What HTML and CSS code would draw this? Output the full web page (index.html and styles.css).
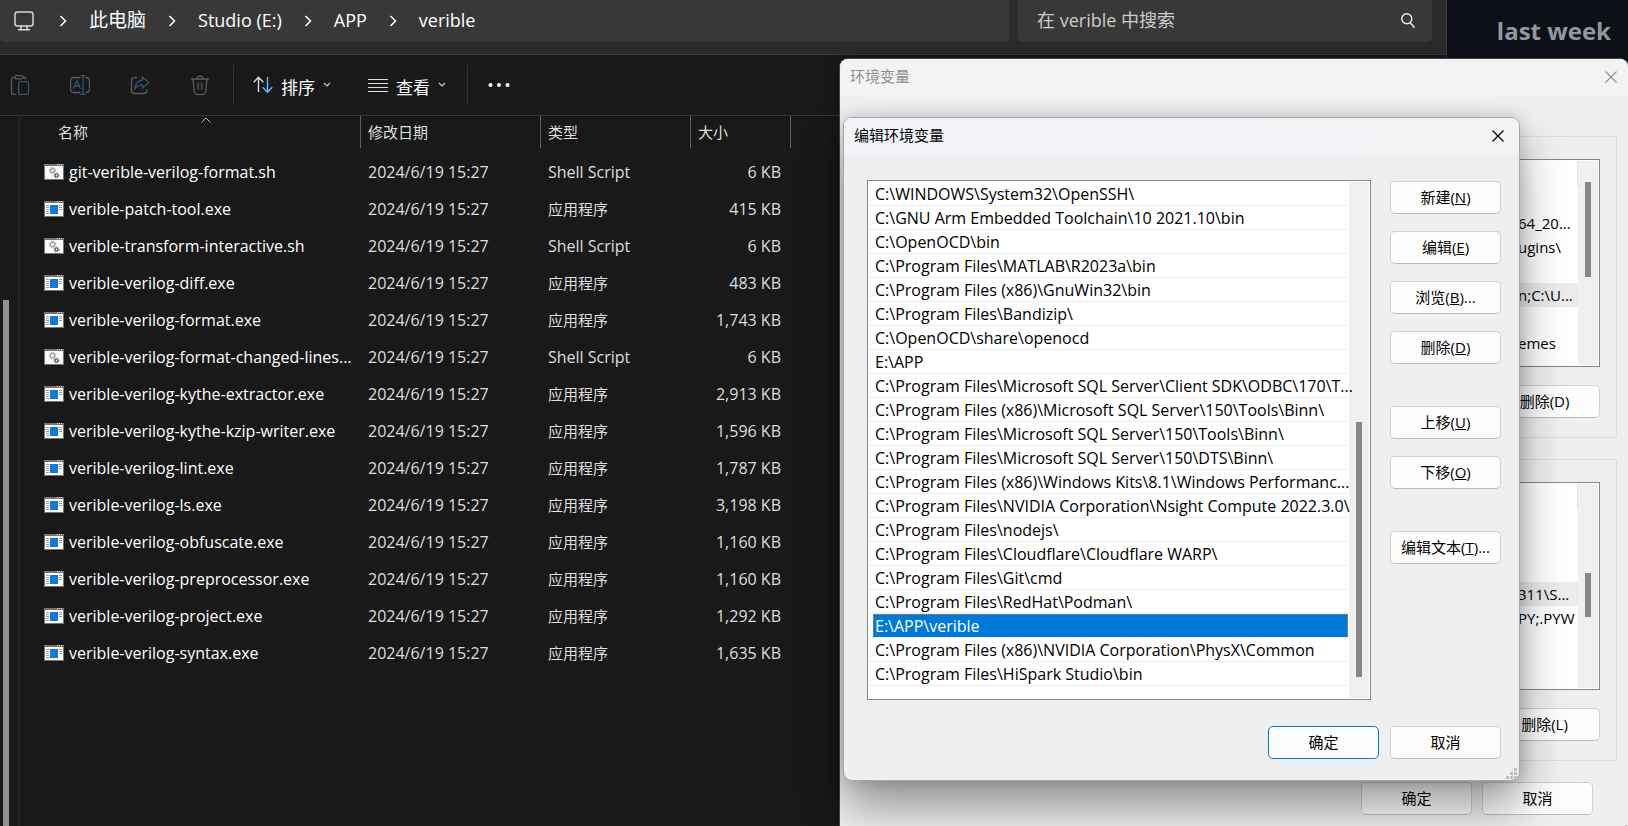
FILE: index.html
```html
<!DOCTYPE html>
<html lang="zh-CN">
<head>
<meta charset="utf-8">
<title>verible</title>
<link rel="stylesheet" href="styles.css">
</head>
<body>
<svg class="symbols" aria-hidden="true">
  <symbol id="exe" viewBox="0 0 20 16">
    <path fill="#75746f" d="M0 0h20v16H0z"/><path fill="#fff" d="M1 2h18v13H1z"/>
    <path fill="#ddd" d="M13 0h1v1h-1zM15 0h1v1h-1zM17 0h1v1h-1z"/>
    <path fill="#0f7bd6" d="M6 4h8v9H6z"/>
    <path stroke="#999" d="M2 4.500h3M2 6.500h3M2 8.500h3M2 10.500h3M2 12.500h3M15 4.500h3M15 6.500h3M15 8.500h3"/>
  </symbol>
  <symbol id="sh" viewBox="0 0 20 16">
    <path fill="#75746f" d="M0 0h20v16H0z"/><path fill="#fafafa" d="M1 2h18v13H1z"/>
    <path fill="#ddd" d="M13 0h1v1h-1zM15 0h1v1h-1zM17 0h1v1h-1z"/>
    <circle cx="8.500" cy="6.500" r="2.200" fill="none" stroke="#9aa4af" stroke-width="1.300"/>
    <circle cx="8.500" cy="6.500" r="3.200" fill="none" stroke="#9aa4af" stroke-dasharray="1.200 1.310"/>
    <circle cx="12.500" cy="11.500" r="1.500" fill="none" stroke="#4c5560" stroke-width="1.200"/>
    <circle cx="12.500" cy="11.500" r="2.400" fill="none" stroke="#4c5560" stroke-dasharray="1 .885"/>
  </symbol>
  <symbol id="chev" viewBox="0 0 8 12"><path d="M1.500 1l5 5-5 5" fill="none" stroke="#fff" stroke-width="1.500"/></symbol>
  <symbol id="down" viewBox="0 0 8 6"><path d="M1 1l3 3 3-3" fill="none" stroke="#ccc" stroke-width="1.200"/></symbol>
  <symbol id="close" viewBox="0 0 12 12"><path d="M.5.5l11 11M11.500.5l-11 11" fill="none" stroke="currentColor" stroke-width="1.200"/></symbol>
  <symbol id="grip" viewBox="0 0 11 11"><path fill="#bfbfbf" d="M8 0h3v3H8zM4 4h3v3H4zM8 4h3v3H8zM0 8h3v3H0zM4 8h3v3H4zM8 8h3v3H8z"/></symbol>
</svg>

<main class="desktop">
  <aside class="browser"><strong>last week</strong></aside>

  <section class="explorer">
    <header class="address-row">
      <nav class="address">
        <svg class="pc" viewBox="0 0 20 20" fill="none" stroke="#d8d8d8" stroke-width="1.500"><rect x="1" y="1" width="18" height="14" rx="2.500"/><path d="M7 15v3.500M13 15v3.500M4 18.800h12"/></svg>
        <svg class="chev"><use href="#chev"/></svg><a href="#" class="han">此电脑</a>
        <svg class="chev"><use href="#chev"/></svg><a href="#">Studio (E:)</a>
        <svg class="chev"><use href="#chev"/></svg><a href="#">APP</a>
        <svg class="chev"><use href="#chev"/></svg><a href="#">verible</a>
      </nav>
      <label class="search">
        <input type="text" placeholder="在 verible 中搜索" aria-label="在 verible 中搜索">
        <svg class="lens" viewBox="0 0 14 16" fill="none" stroke="#eee" stroke-width="1.400"><circle cx="5.800" cy="5.800" r="5"/><path d="M9.300 9.800l4.200 5"/></svg>
      </label>
    </header>

    <div class="toolbar">
      <div class="tools">
        <button aria-label="粘贴"><svg viewBox="0 0 20 20" fill="none" stroke="#5c5c5c" stroke-width="1.300"><path d="M5 2.500H3.500a2 2 0 0 0-2 2v13a2 2 0 0 0 2 2H6M13 2.500h1.500a2 2 0 0 1 1.500 2"/><rect x="5" y=".7" width="8" height="3.200" rx="1.500"/><rect x="8.700" y="6.700" width="9.800" height="12.700" rx="1.500" stroke="#2d5a70"/></svg></button>
        <button aria-label="重命名"><svg viewBox="0 0 20 20" fill="none" stroke="#5c5c5c" stroke-width="1.300"><path d="M10.500 2.500h-7a3 3 0 0 0-3 3v9a3 3 0 0 0 3 3h7M15.500 2.500h1a3 3 0 0 1 3 3v9a3 3 0 0 1-3 3h-1"/><path d="M3.500 14L7 5.500 10.500 14M4.800 11.200h4.400M13 .7v18.600M10.500.7h5M10.500 19.300h5" stroke="#2d5a70"/></svg></button>
        <button aria-label="共享"><svg viewBox="0 0 20 20" fill="none" stroke="#5c5c5c" stroke-width="1.300"><path d="M7 2.700H4.500a3 3 0 0 0-3 3v9.800a3 3 0 0 0 3 3H14a3 3 0 0 0 3-3V14"/><path d="M12.500 2l6.500 5.500-6.500 5.500V9.800C9 9.800 7 11 5 13.500c.5-5 3.500-8 7.500-8.300z" stroke="#2d5a70"/></svg></button>
        <button aria-label="删除"><svg viewBox="0 0 20 20" fill="none" stroke="#5c5c5c" stroke-width="1.300"><path d="M1 4h18M7 4c0-4 6-4 6 0M3 4l1.500 13.500a2 2 0 0 0 2 1.800h7a2 2 0 0 0 2-1.800L17 4M8.200 8v7M11.800 8v7"/></svg></button>
      </div>
      <button class="menu sort"><svg class="glyph" viewBox="0 0 20 18" fill="none" stroke-width="1.400"><path d="M5.500 16V1.500M.7 6.300l4.800-5 4.800 5" stroke="#ddd"/><path d="M14.500 1v15M9.700 11.300l4.800 5 4.800-5" stroke="#4cc2ff"/></svg><span>排序</span><svg class="down"><use href="#down"/></svg></button>
      <button class="menu view"><svg class="glyph" viewBox="0 0 20 18"><path d="M0 3.500h20M0 7.500h20M0 11.500h20M0 15.500h20" stroke="#ddd"/></svg><span>查看</span><svg class="down"><use href="#down"/></svg></button>
      <button class="more" aria-label="更多"><svg viewBox="0 0 22 4" fill="#fff"><circle cx="2.500" cy="2" r="2"/><circle cx="11" cy="2" r="2"/><circle cx="19.500" cy="2" r="2"/></svg></button>
    </div>

    <div class="body">
      <div class="tree"><div class="tree-thumb"></div></div>
      <table class="files">
        <thead><tr><th class="c-name">名称<svg class="up" viewBox="0 0 10 6"><path d="M.5 5.500L5 1l4.500 4.500" fill="none" stroke="#bbb"/></svg></th><th class="c-date">修改日期</th><th class="c-type">类型</th><th class="c-size">大小</th></tr></thead>
        <tbody>
          <tr><td><div><svg><use href="#sh"/></svg><span>git-verible-verilog-format.sh</span></div></td><td>2024/6/19 15:27</td><td>Shell Script</td><td>6 KB</td></tr>
          <tr><td><div><svg><use href="#exe"/></svg><span>verible-patch-tool.exe</span></div></td><td>2024/6/19 15:27</td><td class="app">应用程序</td><td>415 KB</td></tr>
          <tr><td><div><svg><use href="#sh"/></svg><span>verible-transform-interactive.sh</span></div></td><td>2024/6/19 15:27</td><td>Shell Script</td><td>6 KB</td></tr>
          <tr><td><div><svg><use href="#exe"/></svg><span>verible-verilog-diff.exe</span></div></td><td>2024/6/19 15:27</td><td class="app">应用程序</td><td>483 KB</td></tr>
          <tr><td><div><svg><use href="#exe"/></svg><span>verible-verilog-format.exe</span></div></td><td>2024/6/19 15:27</td><td class="app">应用程序</td><td>1,743 KB</td></tr>
          <tr><td><div><svg><use href="#sh"/></svg><span>verible-verilog-format-changed-lines...</span></div></td><td>2024/6/19 15:27</td><td>Shell Script</td><td>6 KB</td></tr>
          <tr><td><div><svg><use href="#exe"/></svg><span>verible-verilog-kythe-extractor.exe</span></div></td><td>2024/6/19 15:27</td><td class="app">应用程序</td><td>2,913 KB</td></tr>
          <tr><td><div><svg><use href="#exe"/></svg><span>verible-verilog-kythe-kzip-writer.exe</span></div></td><td>2024/6/19 15:27</td><td class="app">应用程序</td><td>1,596 KB</td></tr>
          <tr><td><div><svg><use href="#exe"/></svg><span>verible-verilog-lint.exe</span></div></td><td>2024/6/19 15:27</td><td class="app">应用程序</td><td>1,787 KB</td></tr>
          <tr><td><div><svg><use href="#exe"/></svg><span>verible-verilog-ls.exe</span></div></td><td>2024/6/19 15:27</td><td class="app">应用程序</td><td>3,198 KB</td></tr>
          <tr><td><div><svg><use href="#exe"/></svg><span>verible-verilog-obfuscate.exe</span></div></td><td>2024/6/19 15:27</td><td class="app">应用程序</td><td>1,160 KB</td></tr>
          <tr><td><div><svg><use href="#exe"/></svg><span>verible-verilog-preprocessor.exe</span></div></td><td>2024/6/19 15:27</td><td class="app">应用程序</td><td>1,160 KB</td></tr>
          <tr><td><div><svg><use href="#exe"/></svg><span>verible-verilog-project.exe</span></div></td><td>2024/6/19 15:27</td><td class="app">应用程序</td><td>1,292 KB</td></tr>
          <tr><td><div><svg><use href="#exe"/></svg><span>verible-verilog-syntax.exe</span></div></td><td>2024/6/19 15:27</td><td class="app">应用程序</td><td>1,635 KB</td></tr>
        </tbody>
      </table>
    </div>
  </section>

  <section class="env">
    <header class="titlebar"><h2>环境变量</h2><button class="x" aria-label="关闭环境变量"><svg><use href="#close"/></svg></button></header>
    <div class="groups">
      <div class="group">
        <div class="vars">
          <ul class="vals"><li></li><li>64_20...</li><li>ugins\</li><li></li><li class="hot">n;C:\U...</li><li></li><li>emes</li></ul>
          <div class="bar"><div class="thumb user-thumb"></div></div>
        </div>
        <div class="actions"><button class="btn">删除(D)</button></div>
      </div>
      <div class="group">
        <div class="vars">
          <ul class="vals"><li></li><li></li><li></li><li class="hot">311\S...</li><li>PY;.PYW</li></ul>
          <div class="bar"><div class="thumb sys-thumb"></div></div>
        </div>
        <div class="actions"><button class="btn">删除(L)</button></div>
      </div>
    </div>
    <footer class="env-foot"><button class="btn">确定</button><button class="btn">取消</button></footer>
    <svg class="grip"><use href="#grip"/></svg>
  </section>

  <section class="edit">
    <header class="titlebar"><h2>编辑环境变量</h2><button class="x" aria-label="关闭"><svg><use href="#close"/></svg></button></header>
    <div class="edit-main">
      <div class="paths">
        <ul>
          <li>C:\WINDOWS\System32\OpenSSH\</li>
          <li>C:\GNU Arm Embedded Toolchain\10 2021.10\bin</li>
          <li>C:\OpenOCD\bin</li>
          <li>C:\Program Files\MATLAB\R2023a\bin</li>
          <li>C:\Program Files (x86)\GnuWin32\bin</li>
          <li>C:\Program Files\Bandizip\</li>
          <li>C:\OpenOCD\share\openocd</li>
          <li>E:\APP</li>
          <li>C:\Program Files\Microsoft SQL Server\Client SDK\ODBC\170\T...</li>
          <li>C:\Program Files (x86)\Microsoft SQL Server\150\Tools\Binn\</li>
          <li>C:\Program Files\Microsoft SQL Server\150\Tools\Binn\</li>
          <li>C:\Program Files\Microsoft SQL Server\150\DTS\Binn\</li>
          <li>C:\Program Files (x86)\Windows Kits\8.1\Windows Performanc...</li>
          <li>C:\Program Files\NVIDIA Corporation\Nsight Compute 2022.3.0\</li>
          <li>C:\Program Files\nodejs\</li>
          <li>C:\Program Files\Cloudflare\Cloudflare WARP\</li>
          <li>C:\Program Files\Git\cmd</li>
          <li>C:\Program Files\RedHat\Podman\</li>
          <li class="selected"><span>E:\APP\verible</span></li>
          <li>C:\Program Files (x86)\NVIDIA Corporation\PhysX\Common</li>
          <li>C:\Program Files\HiSpark Studio\bin</li>
        </ul>
        <div class="bar"><div class="thumb path-thumb"></div></div>
      </div>
      <div class="side">
        <button class="btn">新建(<u>N</u>)</button>
        <button class="btn">编辑(<u>E</u>)</button>
        <button class="btn">浏览(<u>B</u>)...</button>
        <button class="btn">删除(<u>D</u>)</button>
        <button class="btn apart">上移(<u>U</u>)</button>
        <button class="btn">下移(<u>O</u>)</button>
        <button class="btn apart">编辑文本(<u>T</u>)...</button>
      </div>
    </div>
    <footer class="edit-foot"><button class="btn primary">确定</button><button class="btn">取消</button></footer>
    <svg class="grip"><use href="#grip"/></svg>
  </section>
</main>
</body>
</html>
```
FILE: styles.css
```css
* { box-sizing: border-box; }
body { margin: 0; background: #0d1117; font-family: "Open Sans", "Noto Sans CJK SC", sans-serif; font-size: 15px; line-height: 24px; }
button { font: inherit; color: inherit; background: none; border: 0; padding: 0; }
ul { list-style: none; margin: 0; padding: 0; }
h2 { margin: 0; padding-bottom: 3px; font-size: 15px; font-weight: 400; }
svg { display: block; flex: none; }
.symbols { position: absolute; width: 0; height: 0; }
.desktop { position: relative; height: 100vh; overflow: hidden; }

.browser { display: flex; justify-content: flex-end; padding: 15px 17px; color: #9198a1; font-size: 24px; line-height: 32px; }

.explorer { position: absolute; inset: 0 181px 0 0; display: flex; flex-direction: column; background: #191919; border-right: 1px solid #3a3f45; color: #fff; }
.address-row { display: flex; gap: 9px; padding: 0 14px 12px 0; height: 55px; background: #2b2b2b; border-bottom: 1px solid #3d3d3d; }
.address, .search { display: flex; align-items: center; height: 42px; background: #383838; border-radius: 0 0 5px 5px; font-size: 18px; }
.address { flex: 1; gap: 22px; padding: 0 14px; }
.address a { color: #fff; text-decoration: none; padding-bottom: 2px; }
.address .han { font-size: 19px; }
.pc { width: 20px; height: 20px; margin-right: 3px; }
.chev { width: 8px; height: 12px; }
.search { width: 414px; padding: 0 17px 0 19px; }
.search input { flex: 1; min-width: 0; border: 0; padding: 0 0 2px; outline: 0; background: none; color: #ccc; font: inherit; }
.search input::placeholder { color: #ccc; opacity: 1; }
.lens { width: 14px; height: 16px; }

.toolbar { display: flex; align-items: center; height: 61px; border-bottom: 1px solid #3a3a3a; font-size: 17px; }
.tools { display: flex; gap: 40px; padding: 0 23px 0 10px; height: 40px; align-items: center; border-right: 1px solid #333; }
.tools svg { width: 20px; height: 20px; }
.menu { display: flex; align-items: center; height: 40px; gap: 8px; }
.menu span { padding-top: 5px; }
.sort { padding: 0 18px 0 19px; }
.view { padding: 0 21px 0 19px; border-right: 1px solid #333; }
.glyph { width: 20px; height: 18px; }
.down { width: 8px; height: 6px; }
.more { padding: 0 20px; }
.more svg { width: 22px; height: 4px; }

.body { flex: 1; display: flex; min-height: 0; }
.tree { width: 21px; padding: 184px 0 0 3px; border-right: 3px solid #222; }
.tree-thumb { width: 6px; height: 100%; background: #909090; }
.files { align-self: flex-start; table-layout: fixed; width: 770px; border-collapse: separate; border-spacing: 0; color: #dedede; }
.files th { height: 32px; padding: 0 0 0 7px; border-right: 1px solid #636363; font-weight: 400; text-align: left; }
.files thead::after { content: ""; display: block; height: 6px; }
.files .c-name { position: relative; width: 340px; padding-left: 37px; }
.c-date { width: 180px; }
.c-type { width: 150px; }
.c-size { width: 100px; }
.up { position: absolute; left: 180px; top: 1px; width: 10px; height: 6px; }
.files td { height: 37px; padding: 0 0 2px 7px; font-size: 16px; white-space: nowrap; }
.files .app { font-size: 15px; }
.files td:first-child { padding-left: 23px; color: #fff; }
.files td:last-child { text-align: right; padding-right: 10px; }
.files td div { display: flex; align-items: center; gap: 5px; }
.files td svg { width: 20px; height: 16px; }

.env { position: absolute; inset: 59px 0 0 840px; display: flex; flex-direction: column; background: #efefef; border-radius: 8px 8px 0 0; color: #000; box-shadow: 0 0 0 1px #444, 0 0 16px rgba(0, 0, 0, .4); }
.titlebar { display: flex; align-items: center; justify-content: space-between; height: 37px; border-radius: 8px 8px 0 0; background: #f3f3f3; }
.env .titlebar { padding: 0 11px 0 10px; color: #909090; }
.x { padding-bottom: 2px; }
.x svg { width: 12px; height: 12px; }
.groups { display: flex; flex-direction: column; gap: 21px; padding: 40px 11px 0 20px; }
.group { border: 1px solid #dcdcdc; padding: 22px 16px 19px; }
.vars { display: flex; height: 208px; padding: 1px; background: #fff; border: 1px solid #828790; }
.vals { flex: 1; padding-top: 26px; background: linear-gradient(#e5e5e5, #e5e5e5) 100% 0 / 1px 26px no-repeat; }
.vals li { height: 24px; width: 60px; margin-left: auto; white-space: nowrap; }
.vals .hot { background: #ececec; }
.bar { width: 20px; background: #f0f0f0; }
.thumb { width: 6px; margin-left: 7px; background: #868686; }
.user-thumb { height: 95px; margin-top: 21px; }
.sys-thumb { height: 44px; margin-top: 89px; }
.actions { display: flex; justify-content: flex-end; padding-top: 18px; }
.btn { width: 111px; height: 33px; padding-bottom: 2px; background: #fdfdfd; border: 1px solid #d0d0d0; border-bottom-color: #bcbcbc; border-radius: 5px; }
.env-foot { display: flex; justify-content: flex-end; gap: 10px; padding: 21px 35px 0 0; }
.grip { position: absolute; right: 2px; bottom: 1px; width: 11px; height: 11px; }
.env > .grip { right: -4px; bottom: -6px; }

.edit { position: absolute; left: 843px; top: 117px; width: 677px; background: #efefef; border: 1px solid #a6a6a6; border-radius: 9px; color: #000; box-shadow: 0 26px 46px rgba(0, 0, 0, .38), 0 0 16px rgba(0, 0, 0, .16); }
.edit .titlebar { padding: 0 15px 0 10px; background: linear-gradient(90deg, #f1f3f8 55%, #f3f3f3); }
.edit-main { display: flex; gap: 19px; padding: 25px 18px 0 23px; }
.paths { flex: 1; min-width: 0; display: flex; height: 520px; padding: 1px; background: #fff; border: 1px solid #828790; font-size: 16px; }
.paths ul { flex: 1; min-width: 0; margin-right: 1px; z-index: 1; }
.paths li { height: 24px; padding-left: 6px; line-height: 24px; border-bottom: 1px solid #ededed; white-space: nowrap; }
.paths .selected { padding-left: 4px; }
.selected span { display: block; height: 23px; padding-left: 1px; background: #0078d7; border: 1px dotted #e08a35; border-bottom-color: #0078d7; color: #fff; line-height: 22px; }
.path-thumb { height: 255px; margin-top: 240px; }
.side { display: flex; flex-direction: column; gap: 17px; padding-top: 1px; }
.side .apart { margin-top: 25px; }
.edit-foot { display: flex; justify-content: flex-end; gap: 11px; padding: 26px 18px 21px 0; }
.primary { border-color: #0078d4; }
```
